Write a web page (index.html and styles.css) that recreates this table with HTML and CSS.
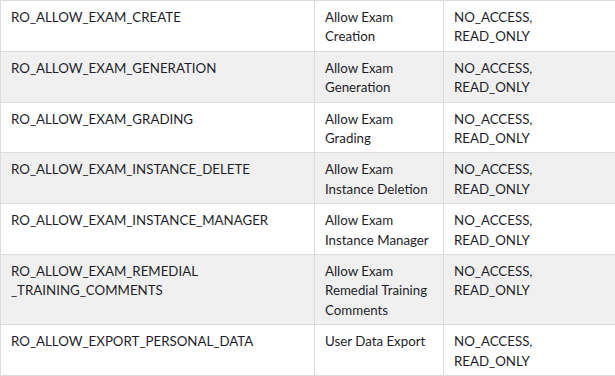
FILE: index.html
```html
<!DOCTYPE html>
<html>
<head>
<meta charset="utf-8">
<link rel="stylesheet" href="styles.css">
</head>
<body>
<table class="perm-table">
  <tbody>
    <tr><td class="c-key">RO_ALLOW_EXAM_CREATE</td><td class="c-name">Allow Exam<br>Creation</td><td class="c-val">NO_ACCESS,<br>READ_ONLY</td></tr>
    <tr><td class="c-key">RO_ALLOW_EXAM_GENERATION</td><td class="c-name">Allow Exam<br>Generation</td><td class="c-val">NO_ACCESS,<br>READ_ONLY</td></tr>
    <tr><td class="c-key">RO_ALLOW_EXAM_GRADING</td><td class="c-name">Allow Exam<br>Grading</td><td class="c-val">NO_ACCESS,<br>READ_ONLY</td></tr>
    <tr><td class="c-key">RO_ALLOW_EXAM_INSTANCE_DELETE</td><td class="c-name">Allow Exam<br>Instance Deletion</td><td class="c-val">NO_ACCESS,<br>READ_ONLY</td></tr>
    <tr><td class="c-key">RO_ALLOW_EXAM_INSTANCE_MANAGER</td><td class="c-name">Allow Exam<br>Instance Manager</td><td class="c-val">NO_ACCESS,<br>READ_ONLY</td></tr>
    <tr><td class="c-key">RO_ALLOW_EXAM_REMEDIAL<br>_TRAINING_COMMENTS</td><td class="c-name">Allow Exam<br>Remedial Training<br>Comments</td><td class="c-val">NO_ACCESS,<br>READ_ONLY</td></tr>
    <tr><td class="c-key">RO_ALLOW_EXPORT_PERSONAL_DATA</td><td class="c-name">User Data Export</td><td class="c-val">NO_ACCESS,<br>READ_ONLY</td></tr>
  </tbody>
</table>
</body>
</html>
```

FILE: styles.css
```css
html, body {
  margin: 0;
  padding: 0;
  background: #ffffff;
}

.perm-table {
  border-collapse: collapse;
  table-layout: fixed;
  width: 100%;
  font-family: "Lato", "Noto Sans", sans-serif;
  font-size: 13.3px;
  line-height: 19.4px;
  color: #1e1e2a;
}

.perm-table td {
  border: 1px solid #dcdcdc;
  padding: 7px 10px 4px 10px;
  vertical-align: top;
  text-align: left;
  white-space: nowrap;
}

.perm-table tr:nth-child(even) td {
  background: #f0f0f0;
}

.c-key {
  width: 293px;
}

.c-name {
  width: 108px;
}

.perm-table td.c-val {
  border-right: 0;
}
```
